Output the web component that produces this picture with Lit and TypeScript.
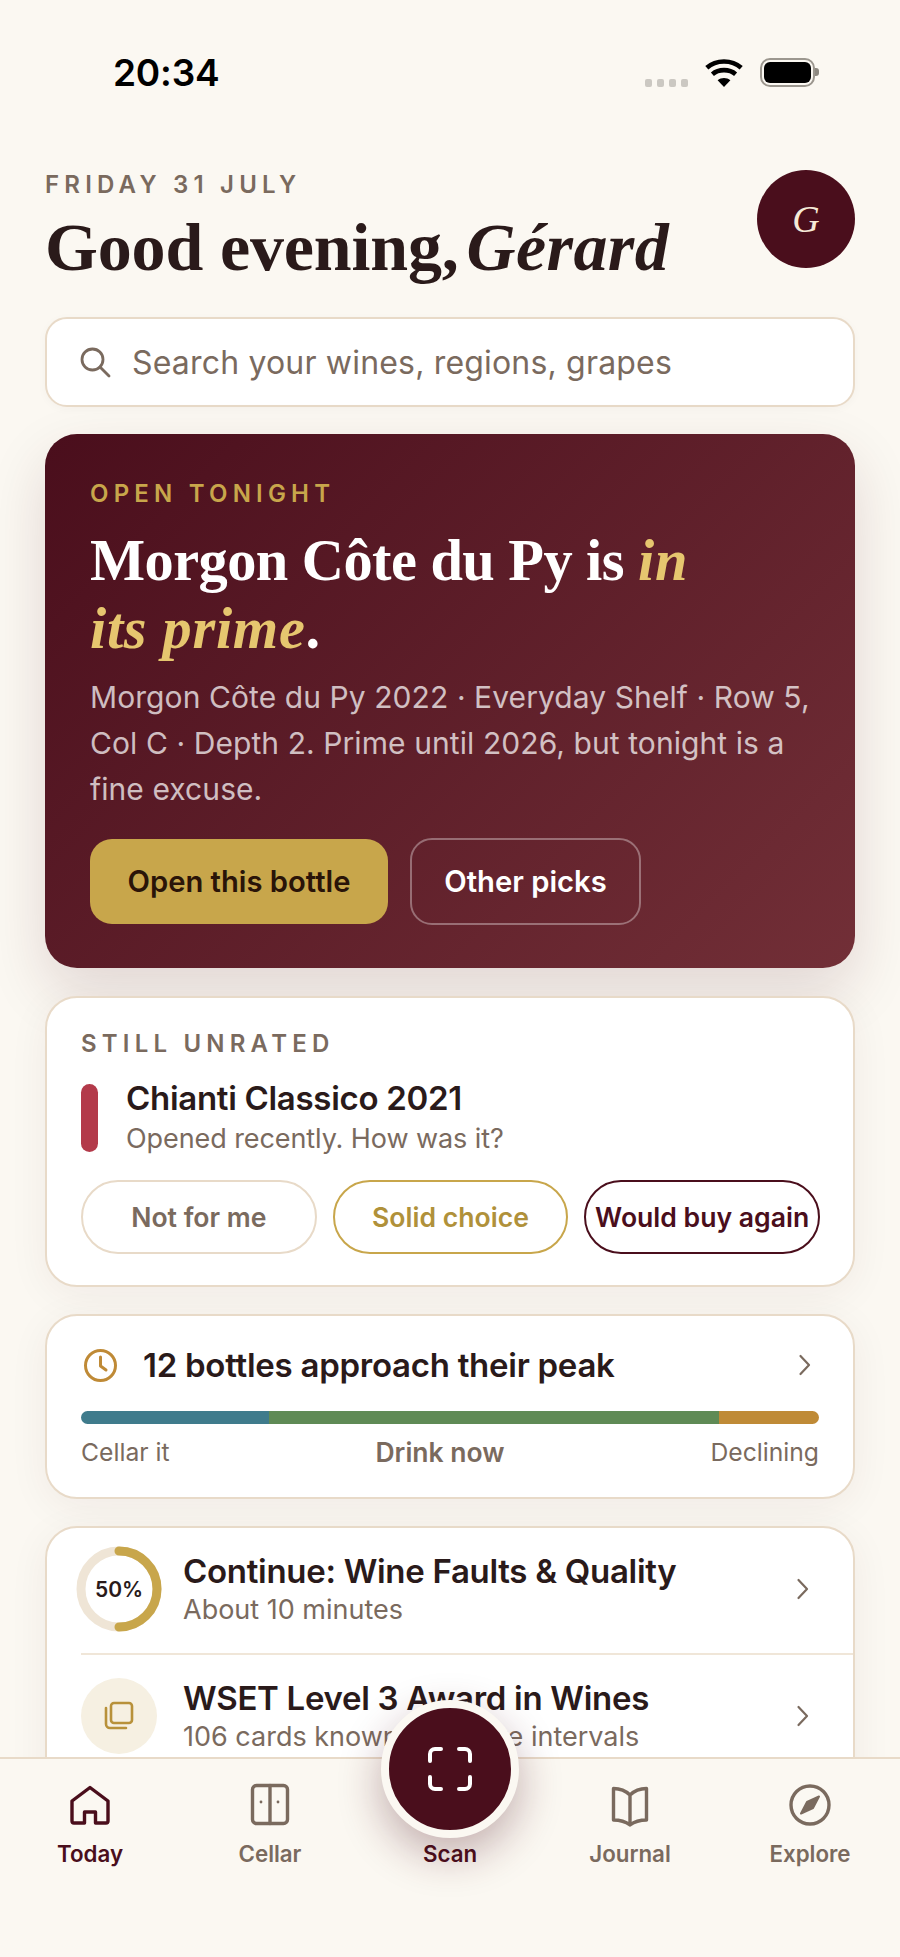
import { LitElement, html, css, svg } from "lit";
import { customElement } from "lit/decorators.js";

const chevron = html`<svg class="chev" width="14" height="24" viewBox="0 0 14 24" fill="none" stroke="#7a6a5e" stroke-width="2.2" stroke-linecap="round" stroke-linejoin="round"><path d="M2.5 3 L11 12 L2.5 21"/></svg>`;

const navItems = [
  { label: "Today", active: true, icon: svg`<path d="M23 4.5 L5 18 V38 a2 2 0 0 0 2 2 H17.5 V29 H28.5 V40 H39 a2 2 0 0 0 2-2 V18 Z"/>` },
  { label: "Cellar", active: false, icon: svg`<rect x="5.5" y="2.5" width="35" height="38" rx="4"/><path d="M23 2.5 V40.5"/><circle cx="14" cy="19" r="1.4" fill="currentColor" stroke="none"/><circle cx="31" cy="19" r="1.4" fill="currentColor" stroke="none"/>` },
  { label: "Scan", active: true, icon: null },
  { label: "Journal", active: false, icon: svg`<path d="M23 12 C19 8 13 5.5 6.5 5.5 V37 C13 37 19 39 23 42 C27 39 33 37 39.5 37 V5.5 C33 5.5 27 8 23 12 Z M23 12 V42"/>` },
  { label: "Explore", active: false, icon: svg`<circle cx="23" cy="22" r="19"/><path d="M32 13.5 L26 25 L14 30.5 L20 19 Z" fill="currentColor" stroke-width="2"/>` },
];

@customElement("app-root")
export class AppRoot extends LitElement {
  static styles = css`
    :host {
      display: block;
      position: relative;
      width: 900px;
      height: 1957px;
      overflow: hidden;
      background: #fbf8f2;
      font-family: Inter, "Liberation Sans", sans-serif;
      color: #2a1a1a;
    }
    .status {
      height: 130px;
      display: flex;
      justify-content: space-between;
      padding: 58px 85px 0 113px;
      box-sizing: border-box;
    }
    .time { font-size: 37px; font-weight: 600; line-height: 30px; height: 30px; color: #000; letter-spacing: -0.2px; }
    .sys { display: flex; align-items: flex-start; }
    .dots { display: flex; gap: 5px; margin: 21px 17px 0 0; }
    .dots i { width: 7px; height: 8px; border-radius: 2px; background: #cbc8c2; }
    .wifi { margin-right: 17px; margin-top: 1px; }
    .batt { position: relative; width: 55px; height: 29px; box-sizing: border-box; border: 2.5px solid #9c978f; border-radius: 10px; padding: 2px; }
    .batt b { display: block; height: 100%; background: #000; border-radius: 6px; }
    .batt::after { content: ""; position: absolute; left: 53px; top: 8px; width: 4px; height: 8px; background: #8d8880; border-radius: 0 3px 3px 0; }

    .content { padding: 0 45px; display: flex; flex-direction: column; gap: 27px; }
    .head { display: flex; justify-content: space-between; margin-top: 40px; height: 120px; }
    .date { font-size: 24px; font-weight: 600; letter-spacing: 5.2px; color: #7a6a5e; line-height: 30px; }
    h1 {
      margin: 10px 0 0;
      font: 700 68px/74px "Liberation Serif", serif;
      letter-spacing: -0.15px;
      color: #2a1a1a;
      white-space: nowrap;
    }
    h1 em { font-style: italic; letter-spacing: 0.4px; margin-left: -9px; }
    .avatar {
      width: 98px; height: 98px; border-radius: 50%;
      background: #4a0e1c; color: #f5ead8;
      display: flex; align-items: center; justify-content: center;
      font: italic 400 38px "Liberation Serif", serif;
    }
    .search {
      height: 90px; box-sizing: border-box;
      border: 2px solid #e8dac8; border-radius: 22px; background: #fff;
      display: flex; align-items: center; gap: 21px; padding-left: 32px;
      font-size: 32px; letter-spacing: 0.18px; color: #7a6a5e;
      box-shadow: 0 2px 10px rgba(74, 14, 28, 0.03);
    }
    .hero {
      height: 534px; box-sizing: border-box;
      padding: 45px;
      border-radius: 32px;
      background: linear-gradient(135deg, #4a0e1c 0%, #722f37 100%);
      box-shadow: 0 24px 60px rgba(74, 14, 28, 0.14);
      color: #fff;
    }
    .eyebrow { font-size: 24px; font-weight: 600; letter-spacing: 5.2px; color: #c8a64b; line-height: 30px; }
    .hero h2 {
      margin: 18px 0 0;
      font: 700 58.4px/68px "Liberation Serif", serif;
      letter-spacing: -0.55px;
      max-width: 640px;
    }
    .hero h2 em { font-style: italic; letter-spacing: 0.7px; color: #e6c66f; }
    .hero p { margin: 11px 0 0; font-size: 30px; letter-spacing: 0.08px; line-height: 46px; color: rgba(255,255,255,0.72); }
    .btns { display: flex; align-items: center; gap: 22px; height: 87px; margin-top: 26px; }
    .btn { height: 85px; box-sizing: border-box; border-radius: 22px; display: flex; align-items: center; justify-content: center; font-size: 29.2px; font-weight: 600; }
    .btn.gold { width: 298px; background: #c8a64b; color: #2a1408; }
    .btn.ghost { width: 231px; height: 87px; border: 2px solid rgba(255,255,255,0.34); color: #fff; }

    .card {
      box-sizing: border-box;
      background: #fff;
      border: 2px solid #e8dac8;
      border-radius: 32px;
      box-shadow: 0 8px 40px rgba(74, 14, 28, 0.06);
    }
    .rate { height: 291px; padding: 31px 34px 0; margin-top: 1px; }
    .label { font-size: 24px; font-weight: 600; letter-spacing: 5.2px; color: #7a6a5e; line-height: 30px; }
    .wine { display: flex; gap: 28px; margin-top: 25px; height: 68px; }
    .swatch { width: 17px; border-radius: 9px; background: #b33a4a; }
    .wname { font-size: 33px; letter-spacing: -0.3px; font-weight: 600; line-height: 40px; margin-top: -6px; }
    .wsub { font-size: 27px; letter-spacing: -0.08px; line-height: 36px; color: #7a6a5e; margin-top: 3px; }
    .pills { display: flex; gap: 16px; margin: 28px -1px 0 0; }
    .pill {
      flex: 1; height: 74px; box-sizing: border-box; border-radius: 37px; background: #fff;
      border: 2px solid #e8dac8; color: #7a6a5e;
      display: flex; align-items: center; justify-content: center;
      font-size: 26.6px; font-weight: 600; white-space: nowrap;
    }
    .pill.mid { border-color: #c8a64b; color: #b0913a; }
    .pill.top { border-color: #4a0e1c; color: #4a0e1c; }

    .peak { height: 185px; padding: 0 34px; }
    .peak-top { display: flex; align-items: center; gap: 26px; height: 95px; box-sizing: border-box; padding-top: 3px; }
    .peak-top span { flex: 1; font-size: 33px; letter-spacing: -0.27px; font-weight: 600; }
    .clock { margin-left: 3px; }
    .chev { margin-right: 7px; }
    .bar { display: flex; height: 13px; border-radius: 7px; overflow: hidden; }
    .bar i { display: block; }
    .ends { display: flex; justify-content: space-between; align-items: center; margin-top: 12px; font-size: 24.7px; color: #7a6a5e; line-height: 32px; }
    .ends b { font-size: 26.5px; font-weight: 600; }

    .list { height: 400px; padding-left: 34px; }
    .row { display: flex; align-items: center; gap: 26px; padding-right: 36px; box-sizing: border-box; }
    .row + .row { border-top: 2px solid #f0e6d8; }
    .r1 { height: 125px; padding-bottom: 3px; }
    .r2 { height: 124px; }
    .slot { width: 76px; height: 76px; flex: none; display: flex; align-items: center; justify-content: center; position: relative; }
    .ring { position: absolute; left: -5px; top: -5px; }
    .pct { position: relative; font-size: 21px; font-weight: 600; }
    .slot.tint { border-radius: 50%; background: #f6f0e2; }
    .txt { flex: 1; }
    .t { font-size: 33px; letter-spacing: -0.3px; font-weight: 600; line-height: 40px; }
    .s { font-size: 27px; line-height: 36px; color: #7a6a5e; margin-top: 1px; }

    .nav {
      position: absolute; left: 0; right: 0; top: 1757px; bottom: 0;
      background: #fbf8f2; border-top: 2px solid #e8dac8;
      display: grid; grid-template-columns: repeat(5, 180px);
    }
    .tab { display: flex; flex-direction: column; align-items: center; padding-top: 24px; color: #7a6a5e; font-size: 22.3px; font-weight: 600; }
    .tab.on { color: #4a0e1c; }
    .tab svg { display: block; }
    .tab .gap { width: 46px; height: 46px; }
    .tab label { margin-top: 10px; line-height: 30px; }
    .fab {
      position: absolute; left: 381px; top: 1700px;
      width: 138px; height: 138px; box-sizing: border-box;
      border-radius: 50%; background: #4a0e1c; border: 8px solid #fbf8f2;
      box-shadow: 0 16px 44px rgba(74, 14, 28, 0.32);
      display: flex; align-items: center; justify-content: center;
    }
  `;

  render() {
    return html`
      <div class="status">
        <div class="time">20:34</div>
        <div class="sys">
          <div class="dots"><i></i><i></i><i></i><i></i></div>
          <svg class="wifi" width="38" height="28" viewBox="0 0 38 28">
            <path fill="#000" d="M19 28 L12.6 21.2 C16.2 18.2 21.8 18.2 25.4 21.2 Z"/>
            <path fill="none" stroke="#000" stroke-width="4.6" d="M7.4 15.2 C13.6 9.8 24.4 9.8 30.6 15.2"/>
            <path fill="none" stroke="#000" stroke-width="4.6" d="M1.8 8.8 C11.2 0.4 26.8 0.4 36.2 8.8"/>
          </svg>
          <div class="batt"><b></b></div>
        </div>
      </div>
      <div class="content">
        <div class="head">
          <div>
            <div class="date">FRIDAY 31 JULY</div>
            <h1>Good evening, <em>Gérard</em></h1>
          </div>
          <div class="avatar">G</div>
        </div>
        <div class="search">
          <svg width="32" height="32" viewBox="0 0 32 32" fill="none" stroke="#7a6a5e" stroke-width="2.8" stroke-linecap="round"><circle cx="13.5" cy="13.5" r="10.5"/><path d="M21 21 L30 30"/></svg>
          <span>Search your wines, regions, grapes</span>
        </div>
        <div class="hero">
          <div class="eyebrow">OPEN TONIGHT</div>
          <h2>Morgon Côte du Py is <em>in its prime</em>.</h2>
          <p>Morgon Côte du Py 2022 · Everyday Shelf · Row 5, Col C · Depth 2. Prime until 2026, but tonight is a fine excuse.</p>
          <div class="btns">
            <div class="btn gold">Open this bottle</div>
            <div class="btn ghost">Other picks</div>
          </div>
        </div>
        <div class="card rate">
          <div class="label">STILL UNRATED</div>
          <div class="wine">
            <div class="swatch"></div>
            <div>
              <div class="wname">Chianti Classico 2021</div>
              <div class="wsub">Opened recently. How was it?</div>
            </div>
          </div>
          <div class="pills">
            <div class="pill">Not for me</div>
            <div class="pill mid">Solid choice</div>
            <div class="pill top">Would buy again</div>
          </div>
        </div>
        <div class="card peak">
          <div class="peak-top">
            <svg class="clock" width="33" height="33" viewBox="0 0 33 33" fill="none" stroke="#bf8a36" stroke-width="3" stroke-linecap="round" stroke-linejoin="round"><circle cx="16.5" cy="16.5" r="15"/><path d="M16.5 8 V17 L22 21"/></svg>
            <span>12 bottles approach their peak</span>
            ${chevron}
          </div>
          <div class="bar">
            <i style="width:188px;background:#3f7b8c"></i>
            <i style="width:450px;background:#5f8a55"></i>
            <i style="flex:1;background:#bf8a36"></i>
          </div>
          <div class="ends"><span>Cellar it</span><b>Drink now</b><span>Declining</span></div>
        </div>
        <div class="card list">
          <div class="row r1">
            <div class="slot">
              <svg class="ring" width="86" height="86" viewBox="0 0 86 86" fill="none" stroke-width="9">
                <circle cx="43" cy="43" r="38" stroke="#efe5d6"/>
                <path d="M43 5 A38 38 0 0 1 43 81" stroke="#c8a64b" stroke-linecap="round"/>
              </svg>
              <span class="pct">50%</span>
            </div>
            <div class="txt">
              <div class="t">Continue: Wine Faults &amp; Quality</div>
              <div class="s">About 10 minutes</div>
            </div>
            ${chevron}
          </div>
          <div class="row r2">
            <div class="slot tint">
              <svg width="30" height="30" viewBox="0 0 30 30" fill="none" stroke="#b8913a" stroke-width="2.6" stroke-linecap="round" stroke-linejoin="round"><rect x="7" y="2" width="21" height="20" rx="3"/><path d="M2 7 V23 a4 4 0 0 0 4 4 H22"/></svg>
            </div>
            <div class="txt">
              <div class="t">WSET Level 3 Award in Wines</div>
              <div class="s">106 cards known, adaptive intervals</div>
            </div>
            ${chevron}
          </div>
        </div>
      </div>
      <div class="nav">
        ${navItems.map(n => html`
          <div class="tab ${n.active ? "on" : ""}">
            ${n.icon
              ? html`<svg width="46" height="46" viewBox="0 0 46 46" fill="none" stroke="currentColor" stroke-width="3.4" stroke-linejoin="round" stroke-linecap="round">${n.icon}</svg>`
              : html`<div class="gap"></div>`}
            <label>${n.label}</label>
          </div>`)}
      </div>
      <div class="fab">
        <svg width="46" height="46" viewBox="0 0 46 46" fill="none" stroke="#fff" stroke-width="4" stroke-linecap="round"><path d="M3 15 V8 a5 5 0 0 1 5-5 H14 M32 3 H38 a5 5 0 0 1 5 5 V15 M43 31 V38 a5 5 0 0 1-5 5 H32 M14 43 H8 a5 5 0 0 1-5-5 V31"/></svg>
      </div>
    `;
  }
}
